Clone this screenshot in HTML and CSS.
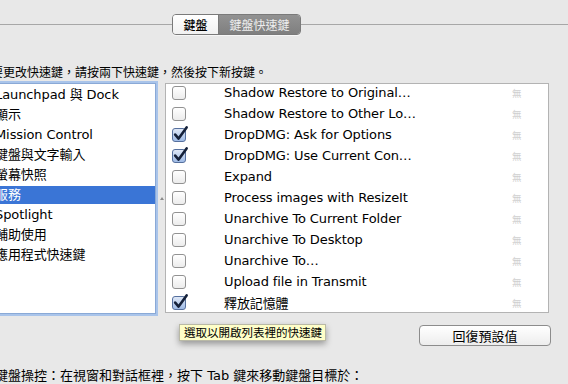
FILE: index.html
```html
<!DOCTYPE html>
<html lang="zh-Hant">
<head>
<meta charset="utf-8">
<link rel="stylesheet" href="styles.css">
</head>
<body>
<div class="window">
  <div class="tabbar">
    <div class="segmented">
      <div class="seg seg-on">鍵盤</div>
      <div class="seg seg-off">鍵盤快速鍵</div>
    </div>
  </div>

  <p class="instruction">要更改快速鍵，請按兩下快速鍵，然後按下新按鍵。</p>

  <div class="panes">
    <div class="catlist">
      <div class="cat">Launchpad 與 Dock</div>
      <div class="cat">顯示</div>
      <div class="cat">Mission Control</div>
      <div class="cat">鍵盤與文字輸入</div>
      <div class="cat">螢幕快照</div>
      <div class="cat selected">服務</div>
      <div class="cat">Spotlight</div>
      <div class="cat">輔助使用</div>
      <div class="cat">應用程式快速鍵</div>
    </div>
    <div class="divider"><span class="grip"></span></div>
    <div class="shortcuts">
      <div class="row"><span class="cb"></span><span class="label">Shadow Restore to Original…</span><span class="key">無</span></div>
      <div class="row"><span class="cb"></span><span class="label">Shadow Restore to Other Lo…</span><span class="key">無</span></div>
      <div class="row"><span class="cb checked"><svg viewBox="0 0 16 16" class="tick"><path d="M3.2 8.6 L6.6 12.6 L14.6 1.4" fill="none" stroke="#15213a" stroke-width="2.6" stroke-linecap="round" stroke-linejoin="round"/></svg></span><span class="label">DropDMG: Ask for Options</span><span class="key">無</span></div>
      <div class="row"><span class="cb checked"><svg viewBox="0 0 16 16" class="tick"><path d="M3.2 8.6 L6.6 12.6 L14.6 1.4" fill="none" stroke="#15213a" stroke-width="2.6" stroke-linecap="round" stroke-linejoin="round"/></svg></span><span class="label">DropDMG: Use Current Con…</span><span class="key">無</span></div>
      <div class="row"><span class="cb"></span><span class="label">Expand</span><span class="key">無</span></div>
      <div class="row"><span class="cb"></span><span class="label">Process images with ResizeIt</span><span class="key">無</span></div>
      <div class="row"><span class="cb"></span><span class="label">Unarchive To Current Folder</span><span class="key">無</span></div>
      <div class="row"><span class="cb"></span><span class="label">Unarchive To Desktop</span><span class="key">無</span></div>
      <div class="row"><span class="cb"></span><span class="label">Unarchive To…</span><span class="key">無</span></div>
      <div class="row"><span class="cb"></span><span class="label">Upload file in Transmit</span><span class="key">無</span></div>
      <div class="row"><span class="cb checked"><svg viewBox="0 0 16 16" class="tick"><path d="M3.2 8.6 L6.6 12.6 L14.6 1.4" fill="none" stroke="#15213a" stroke-width="2.6" stroke-linecap="round" stroke-linejoin="round"/></svg></span><span class="label">釋放記憶體</span><span class="key">無</span></div>
    </div>
  </div>

  <div class="actions">
    <div class="tooltip">選取以開啟列表裡的快速鍵</div>
    <button class="restore">回復預設值</button>
  </div>

  <p class="footer">鍵盤操控：在視窗和對話框裡，按下 Tab 鍵來移動鍵盤目標於：</p>
</div>
</body>
</html>
```

FILE: styles.css
```css
html, body {
  margin: 0;
  padding: 0;
}
body {
  width: 568px;
  height: 384px;
  overflow: hidden;
  background: #e8e8e8;
  font-family: "DejaVu Sans", "Noto Sans CJK TC", sans-serif;
  font-size: 13px;
  color: #000;
}
.window {
  position: relative;
  width: 568px;
  height: 384px;
}
.tabbar {
  height: 24px;
  border-bottom: 1px solid #a7a7a7;
  display: flex;
  align-items: flex-start;
}
.segmented {
  margin-left: 172px;
  margin-top: 14px;
  height: 19px;
  display: flex;
  border: 1px solid #7a7a7a;
  border-radius: 4px;
  overflow: hidden;
  box-shadow: 0 1px 0 rgba(255,255,255,0.6);
}
.seg {
  display: flex;
  align-items: center;
  justify-content: center;
  font-family: "Noto Sans CJK TC", sans-serif;
  font-size: 12px;
  line-height: 19px;
}
.seg-on {
  width: 45px;
  background: linear-gradient(#ffffff, #f1f1f1);
  color: #000;
  font-weight: 500;
  border-right: 1px solid #7a7a7a;
}
.seg-off {
  width: 81px;
  background: linear-gradient(#929292, #7f7f7f);
  color: #eeeeee;
}
.instruction {
  margin: 39px 0 0 -9px;
  height: 16px;
  line-height: 16px;
  font-family: "Noto Sans CJK TC", sans-serif;
  font-size: 12px;
  white-space: nowrap;
}
.panes {
  margin-top: 3px;
  display: flex;
  align-items: flex-start;
}
.catlist {
  margin-left: -20px;
  width: 174px;
  height: 228px;
  background: #fff;
  border: 1px solid #8aa9d6;
  box-shadow: 0 0 0 2px #a9c4ea;
  padding-top: 1px;
  letter-spacing: -0.1px;
}
.cat {
  height: 20px;
  line-height: 20px;
  padding-left: 14px;
  white-space: nowrap;
}
.cat.selected {
  background: #3a75d6;
  color: #fff;
  height: 18px;
  line-height: 18px;
  margin: 1px 0;
}
.divider {
  width: 9px;
  height: 230px;
  display: flex;
  align-items: center;
  justify-content: center;
}
.grip {
  width: 0;
  height: 0;
  border-left: 2px solid transparent;
  border-right: 2px solid transparent;
  border-bottom: 3px solid #8a8a8a;
  margin-left: 2px;
}
.shortcuts {
  width: 382px;
  height: 228px;
  background: #fff;
  border: 1px solid #b3b3b3;
  overflow: hidden;
  letter-spacing: -0.12px;
}
.row {
  height: 21px;
  display: flex;
  align-items: center;
}
.row:first-child {
  margin-top: -2px;
}
.cb {
  position: relative;
  box-sizing: border-box;
  width: 14px;
  height: 14px;
  margin-left: 6px;
  border: 1px solid #929292;
  border-radius: 3px;
  background: linear-gradient(#ffffff, #ececec);
  flex: none;
}
.cb.checked {
  border-color: #56709e;
  background: linear-gradient(#dfe8f7, #9fbbe6);
}
.tick {
  position: absolute;
  left: -1px;
  top: -3px;
  width: 16px;
  height: 16px;
}
.label {
  margin-left: 38px;
  flex: 1;
  white-space: nowrap;
  overflow: hidden;
}
.key {
  width: 36px;
  font-family: "Noto Sans CJK TC", sans-serif;
  font-size: 9.5px;
  color: #cfcfcf;
}
.actions {
  position: relative;
  height: 40px;
  display: flex;
  justify-content: flex-end;
  align-items: flex-start;
}
.tooltip {
  position: absolute;
  left: 179px;
  top: 10px;
  height: 15px;
  line-height: 15px;
  padding: 0 3px 0 4px;
  background: #fefec8;
  border: 1px solid #b9b9a6;
  font-family: "Noto Sans CJK TC", sans-serif;
  font-size: 11.5px;
  box-shadow: 0 3px 6px rgba(0,0,0,0.35);
  white-space: nowrap;
}
.restore {
  margin: 11px 17px 0 0;
  width: 132px;
  height: 21px;
  padding: 0;
  border: 1px solid #8c8c8c;
  border-radius: 4px;
  background: linear-gradient(#ffffff, #ededed);
  font-family: "Noto Sans CJK TC", sans-serif;
  font-size: 13px;
  color: #000;
  line-height: 19px;
}
.footer {
  margin: 14px 0 0 -5px;
  font-family: "DejaVu Sans", "Noto Sans CJK TC", sans-serif;
  font-size: 13px;
  line-height: 16px;
  white-space: nowrap;
  text-spacing-trim: space-all;
}
```
